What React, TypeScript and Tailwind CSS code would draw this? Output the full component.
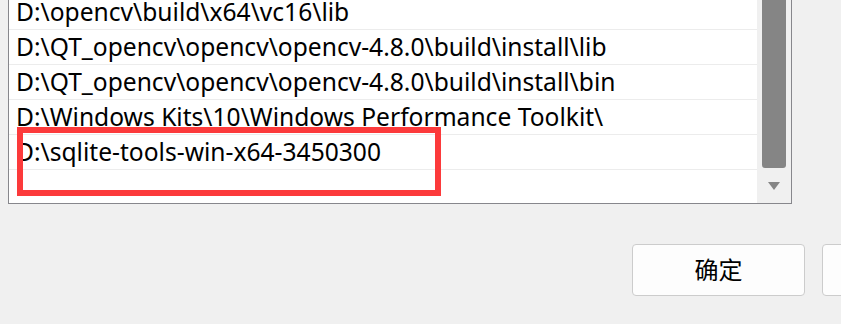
export default function App() {
  const rows = [
    'D:\\opencv\\build\\x64\\vc16\\lib',
    'D:\\QT_opencv\\opencv\\opencv-4.8.0\\build\\install\\lib',
    'D:\\QT_opencv\\opencv\\opencv-4.8.0\\build\\install\\bin',
    'D:\\Windows Kits\\10\\Windows Performance Toolkit\\',
    'D:\\sqlite-tools-win-x64-3450300',
  ]

  return (
    <div
      className="relative w-[841px] h-[324px] overflow-hidden bg-[#f0f0f0] text-black"
      style={{ fontFamily: '"Noto Sans", "Noto Sans CJK SC", sans-serif' }}
    >
      {/* 路径列表 */}
      <div className="ml-[8px] mt-[-6px] w-[784px] h-[210px] border border-[#87878c] bg-white flex">
        <div className="flex-1 flex flex-col overflow-hidden">
          {rows.map((r, i) => (
            <div
              key={i}
              className="h-[35px] shrink-0 border-b border-[#ececec] pl-[7px] flex items-center text-[24.6px] leading-none whitespace-pre"
            >
              {r}
            </div>
          ))}
          <div className="flex-1" />
        </div>
        {/* 滚动条 */}
        <div className="w-[34px] bg-[#f0f0f0] flex flex-col items-start">
          <div className="ml-[5px] w-[24px] h-[173px] bg-[#858585] rounded-b-[3px]" />
          <div className="ml-[11px] mt-[14px] w-0 h-0 border-l-[6px] border-r-[6px] border-t-[8px] border-l-transparent border-r-transparent border-t-[#858585]" />
        </div>
      </div>

      {/* 红框标注 */}
      <div className="absolute left-[17px] top-[127px] w-[424px] h-[69px] border-[6px] border-[#fc3a3b]" />

      {/* 按钮 */}
      <div className="mt-[40px] ml-[632px] flex gap-[17px]">
        <button className="w-[173px] h-[52px] shrink-0 rounded-[4px] border border-[#cccccc] bg-[#fdfdfd] text-[24px] leading-none">
          确定
        </button>
        <button className="w-[173px] h-[52px] shrink-0 rounded-[4px] border border-[#cccccc] bg-[#fdfdfd] text-[24px] leading-none">
          取消
        </button>
      </div>
    </div>
  )
}
